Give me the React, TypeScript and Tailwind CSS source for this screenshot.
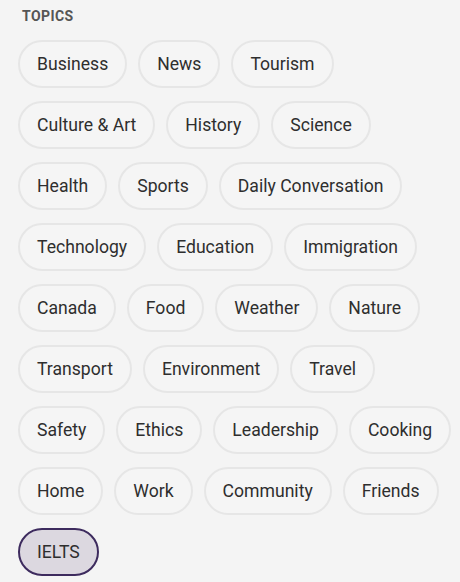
import React, { useState } from 'react';

const topics = [
  'Business', 'News', 'Tourism',
  'Culture & Art', 'History', 'Science',
  'Health', 'Sports', 'Daily Conversation',
  'Technology', 'Education', 'Immigration',
  'Canada', 'Food', 'Weather', 'Nature',
  'Transport', 'Environment', 'Travel',
  'Safety', 'Ethics', 'Leadership', 'Cooking',
  'Home', 'Work', 'Community', 'Friends',
  'IELTS',
];

const App: React.FC = () => {
  const [selected, setSelected] = useState<string>('IELTS');

  return (
    <div className="min-h-[582px] w-[460px] bg-[#f4f4f4] pl-[18px] pr-[6px] pt-[9px] font-['Roboto',sans-serif]">
      <h2 className="pl-[4px] text-[14px] font-bold tracking-[0.03em] text-[#555555] leading-[14px]">TOPICS</h2>
      <div className="mt-[17px] flex flex-wrap gap-x-[11px] gap-y-[13px]">
        {topics.map(topic => {
          const active = topic === selected;
          return (
            <button
              key={topic}
              onClick={() => setSelected(topic)}
              className={
                active
                  ? 'h-[48px] rounded-full border-2 border-[#3d2b5e] bg-[#dcd8e0] px-[17px] text-[17.6px] text-[#2e2e2e]'
                  : 'h-[48px] rounded-full border-2 border-[#e6e6e6] bg-[#f5f5f5] px-[17px] text-[17.6px] text-[#2e2e2e]'
              }
            >
              {topic}
            </button>
          );
        })}
      </div>
    </div>
  );
};

export default App;
